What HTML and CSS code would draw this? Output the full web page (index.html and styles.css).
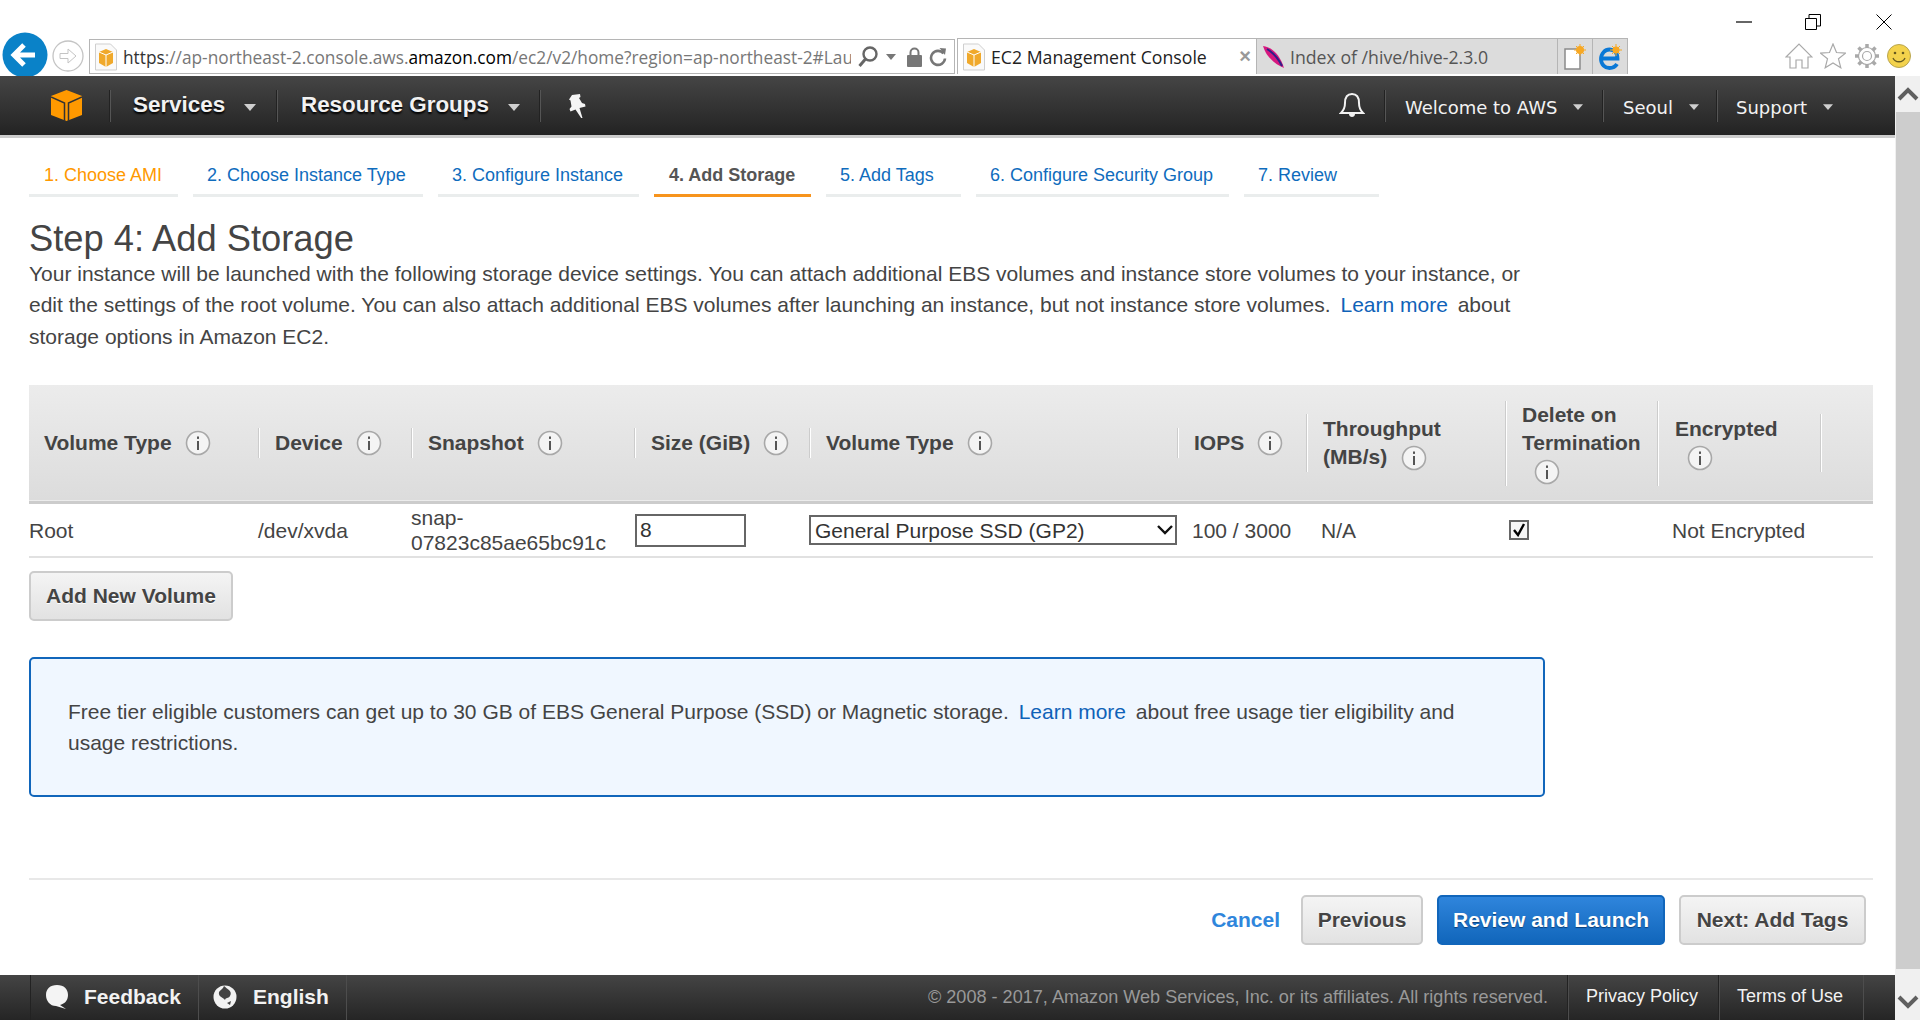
FILE: index.html
```html
<!DOCTYPE html>
<html lang="en">
<head>
<meta charset="utf-8">
<title>EC2 Management Console</title>
<link rel="stylesheet" href="styles.css">
</head>
<body>
<svg class="defs" aria-hidden="true">
  <symbol id="info" viewBox="0 0 26 26">
    <circle cx="13" cy="13" r="11.5" fill="#f4f4f4" stroke="#a8a8a8" stroke-width="1.6"/>
    <rect x="12" y="11" width="2" height="9" fill="#555"/>
    <rect x="12" y="6.5" width="2" height="2.4" fill="#555"/>
  </symbol>
  <symbol id="favicon" viewBox="0 0 24 28">
    <path d="M1.500 1h15l6 6v20h-21z" fill="#fafafa" stroke="#cfcfcf"/>
    <path d="M12 6l7 3v11l-7 4-7-4V9z" fill="#f0a92b"/>
    <path d="M5 9l7 3 7-3M12 12v12" fill="none" stroke="#fff" stroke-width="1"/>
  </symbol>
  <symbol id="caret" viewBox="0 0 12 8">
    <path d="M0 0h12L6 7z" fill="#cfcfcf"/>
  </symbol>
</svg>

<div class="chrome-title">
  <svg class="win-icon win-min" viewBox="0 0 16 16"><path d="M0 8h16" stroke="#000" stroke-width="1.200"/></svg>
  <svg class="win-icon win-max" viewBox="0 0 16 16"><path d="M.5 4.500h11v11H.5zM4 4.500V.5h11.500V12h-4" fill="none" stroke="#000"/></svg>
  <svg class="win-icon win-close" viewBox="0 0 16 16"><path d="M.5.5l15 15M15.500.5l-15 15" stroke="#000"/></svg>
</div>

<div class="chrome-bar">
  <span class="back-btn">
    <svg viewBox="0 0 46 46" width="46" height="46"><circle cx="23" cy="23" r="22.500" fill="#0a82c8"/><path d="M33 23H13M22 13L12 23l10 10" fill="none" stroke="#fff" stroke-width="5"/></svg>
  </span>
  <span class="forward-btn">
    <svg viewBox="0 0 32 32" width="32" height="32"><circle cx="16" cy="16" r="15" fill="#fff" stroke="#c4c4c4" stroke-width="1.300"/><path d="M8 13.500h8V9l8 7-8 7v-4.500H8z" fill="#fff" stroke="#c4c4c4"/></svg>
  </span>
  <div class="address">
    <svg class="fav"><use href="#favicon"/></svg>
    <span class="url"><span class="url-dark">https</span>://ap-northeast-2.console.aws.<span class="url-black">amazon.com</span>/ec2/v2/home?region=ap-northeast-2#LaunchInstanceWizard:</span>
    <svg class="addr-icon" width="20" height="24" viewBox="0 0 20 24"><circle cx="12" cy="9" r="6.500" fill="none" stroke="#666" stroke-width="2.400"/><path d="M7.500 14L1.500 21" stroke="#666" stroke-width="3"/></svg>
    <svg class="addr-caret" width="10" height="6" viewBox="0 0 10 6"><path d="M0 0h10L5 6z" fill="#777"/></svg>
    <svg class="addr-lock" width="15" height="20" viewBox="0 0 15 20"><path d="M3.500 9V5.500a4 4 0 0 1 8 0V9" fill="none" stroke="#777" stroke-width="2"/><rect y="8" width="15" height="12" rx="1" fill="#777"/></svg>
    <svg class="addr-reload" width="18" height="20" viewBox="0 0 18 20"><path d="M14.500 6.500a7 7 0 1 0 1.500 5" fill="none" stroke="#777" stroke-width="2.600"/><path d="M10.500 1l6.500.5-1 6.500z" fill="#777"/></svg>
  </div>
  <div class="tab tab-active">
    <svg class="fav"><use href="#favicon"/></svg>
    <span class="tab-text">EC2 Management Console</span>
    <span class="tab-x">×</span>
  </div>
  <div class="tab tab-idle">
    <svg class="feather" width="24" height="24" viewBox="0 0 24 24"><path d="M1 1c9 1 17 9 21 22C14 20 4 12 1 1z" fill="#d6187f"/><path d="M5 4c5 3 11 9 15 17" fill="none" stroke="#30208a" stroke-width="2"/></svg>
    <span class="tab-text">Index of /hive/hive-2.3.0</span>
  </div>
  <div class="tab-btn">
    <svg width="22" height="26" viewBox="0 0 22 26"><rect x="1" y="5" width="15" height="20" fill="#fff" stroke="#8a8a8a" stroke-width="1.500"/><circle cx="16" cy="6" r="4" fill="#f7a823"/><path d="M16 0v12M10 6h12M12 2l8 8M20 2l-8 8" stroke="#f7a823"/></svg>
  </div>
  <div class="tab-btn">
    <svg width="24" height="26" viewBox="0 0 24 26"><path d="M3.500 14.500h16c0-6-3.500-9-8-9-4.500 0-8.500 4-8.500 9.500s4 9 8.500 9c3.500 0 6-1.500 7.500-4" fill="none" stroke="#0a78d6" stroke-width="3.800"/><circle cx="18" cy="6" r="3.500" fill="#f7a823"/><path d="M18 0v12M12 6h12M14 2l8 8M22 2l-8 8" stroke="#f7a823"/></svg>
  </div>
  <div class="tool-icons">
    <svg width="28" height="26" viewBox="0 0 28 26"><path d="M1 14L14 1l13 13h-4v11h-6v-8h-6v8H5V14z" fill="#fff" stroke="#a9a9a9" stroke-width="1.200"/></svg>
    <svg width="26" height="26" viewBox="0 0 26 26"><path d="M13 1l3.500 8.500 9 .6-7 5.700 2.300 9L13 20l-7.800 4.800 2.300-9-7-5.700 9-.6z" fill="#fff" stroke="#a9a9a9" stroke-width="1.200"/></svg>
    <svg width="26" height="26" viewBox="0 0 26 26"><circle cx="13" cy="13" r="4.500" fill="none" stroke="#a9a9a9" stroke-width="1.200"/><circle cx="13" cy="13" r="8.500" fill="none" stroke="#a9a9a9" stroke-width="1.200"/><path d="M13 1v4M13 21v4M1 13h4M21 13h4M4.500 4.500l3 3M18.500 18.500l3 3M21.500 4.500l-3 3M7.500 18.500l-3 3" stroke="#a9a9a9" stroke-width="3.500"/></svg>
    <svg width="24" height="24" viewBox="0 0 24 24"><circle cx="12" cy="12" r="11.500" fill="#f3d24c" stroke="#b8a550"/><circle cx="8" cy="9" r="1.300" fill="#665a20"/><circle cx="16" cy="9" r="1.300" fill="#665a20"/><path d="M6 14c2 5 10 5 12 0" fill="none" stroke="#665a20" stroke-width="1.300"/></svg>
  </div>
</div>

<div class="viewport">
  <div class="page">
    <header class="topnav">
      <div class="nav-group">
        <a class="nav-logo">
          <svg width="31" height="31" viewBox="0 0 31 31"><path d="M15.500 0L31 6v19l-15.500 6L0 25V6z" fill="#f90"/><path d="M0 7l13.500 6v18M31 7l-13.500 6v18" fill="none" stroke="#333" stroke-width="1.500"/></svg>
        </a>
        <a class="nav-main nav-services">Services<svg class="nav-caret"><use href="#caret"/></svg></a>
        <a class="nav-main nav-groups">Resource Groups<svg class="nav-caret"><use href="#caret"/></svg></a>
        <a class="nav-pin">
          <svg width="20" height="24" viewBox="0 0 20 24"><path d="M5 1l8-1 .5 3-1.500 1 3 5 3 1 .5 2.500-6 1.500 3 10-1 .5-6-9-5 2-1-2.500 2-2.500-1-6-1.500-1z" fill="#f4f4f4"/></svg>
        </a>
      </div>
      <div class="nav-group">
        <a class="nav-bell">
          <svg width="26" height="28" viewBox="0 0 26 28"><path d="M13 2c5 0 7 4 7 9 0 5 2 8 4 10H2c2-2 4-5 4-10 0-5 2-9 7-9z" fill="none" stroke="#f2f2f2" stroke-width="2"/><path d="M10 22c0 4 6 4 6 0z" fill="#f2f2f2"/></svg>
        </a>
        <a class="nav-alt nav-welcome"><span class="nav-alt-text">Welcome to AWS</span><svg class="nav-caret-small"><use href="#caret"/></svg></a>
        <a class="nav-alt nav-seoul"><span class="nav-alt-text">Seoul</span><svg class="nav-caret-small"><use href="#caret"/></svg></a>
        <a class="nav-alt nav-support"><span class="nav-alt-text">Support</span><svg class="nav-caret-small"><use href="#caret"/></svg></a>
      </div>
    </header>

    <main class="content">
      <nav class="steps">
        <a class="step step-1 step-done">1. Choose AMI</a>
        <a class="step step-2">2. Choose Instance Type</a>
        <a class="step step-3">3. Configure Instance</a>
        <a class="step step-4 step-current">4. Add Storage</a>
        <a class="step step-5">5. Add Tags</a>
        <a class="step step-6">6. Configure Security Group</a>
        <a class="step step-7">7. Review</a>
      </nav>

      <h1 class="title">Step 4: Add Storage</h1>
      <p class="intro">Your instance will be launched with the following storage device settings. You can attach additional EBS volumes and instance store volumes to your instance, or edit the settings of the root volume. You can also attach additional EBS volumes after launching an instance, but not instance store volumes. <a class="link">Learn more</a> about storage options in Amazon EC2.</p>

      <table class="volumes">
        <colgroup>
          <col class="c1"><col class="c2"><col class="c3"><col class="c4"><col class="c5"><col class="c6"><col class="c7"><col class="c8"><col class="c9"><col class="c10">
        </colgroup>
        <thead>
          <tr>
            <th class="th-first"><div class="th-in">Volume Type <svg class="i"><use href="#info"/></svg></div></th>
            <th><div class="th-in">Device <svg class="i"><use href="#info"/></svg></div></th>
            <th><div class="th-in">Snapshot <svg class="i"><use href="#info"/></svg></div></th>
            <th><div class="th-in">Size (GiB) <svg class="i"><use href="#info"/></svg></div></th>
            <th><div class="th-in">Volume Type <svg class="i"><use href="#info"/></svg></div></th>
            <th><div class="th-in">IOPS <svg class="i"><use href="#info"/></svg></div></th>
            <th><div class="th-in th-mid"><div>Throughput<br>(MB/s) <svg class="i i-tp"><use href="#info"/></svg></div></div></th>
            <th><div class="th-in th-tall"><div>Delete on<br>Termination<br><svg class="i i-line"><use href="#info"/></svg></div></div></th>
            <th><div class="th-in th-tall th-enc"><div>Encrypted<br><svg class="i i-line"><use href="#info"/></svg></div></div></th>
            <th><div class="th-in th-mid"></div></th>
          </tr>
        </thead>
        <tbody>
          <tr>
            <td>Root</td>
            <td>/dev/xvda</td>
            <td class="td-snap">snap-<br>07823c85ae65bc91c</td>
            <td><input class="size-input" type="text" value="8"></td>
            <td>
              <span class="select-wrap">
                <select class="type-select"><option>General Purpose SSD (GP2)</option></select>
                <svg class="select-chev" width="16" height="10" viewBox="0 0 16 10"><path d="M1 1l7 7 7-7" fill="none" stroke="#111" stroke-width="2.400"/></svg>
              </span>
            </td>
            <td class="td-iops">100 / 3000</td>
            <td class="td-tp">N/A</td>
            <td class="td-check"><span class="check"><svg width="14" height="14" viewBox="0 0 14 14"><path d="M2 7l4 5 6-11" fill="none" stroke="#000" stroke-width="2.400"/></svg></span></td>
            <td class="td-enc" colspan="2">Not Encrypted</td>
          </tr>
        </tbody>
      </table>

      <button class="btn btn-add" type="button">Add New Volume</button>

      <div class="notice">
        <p>Free tier eligible customers can get up to 30 GB of EBS General Purpose (SSD) or Magnetic storage. <a class="link">Learn more</a> about free usage tier eligibility and usage restrictions.</p>
      </div>

      <div class="actions">
        <a class="cancel">Cancel</a>
        <button class="btn btn-prev" type="button">Previous</button>
        <button class="btn btn-primary" type="button">Review and Launch</button>
        <button class="btn btn-next" type="button">Next: Add Tags</button>
      </div>
    </main>

    <footer class="foot">
      <div class="foot-left">
        <a class="foot-item foot-feedback">
          <svg width="26" height="26" viewBox="0 0 26 26"><path d="M13 1c7 0 11 4 11 10s-4 9-8 10l6 4-10-3C6 22 2 17 2 11 2 5 6 1 13 1z" fill="#f4f4f4"/></svg>
          Feedback
        </a>
        <a class="foot-item foot-lang">
          <svg width="24" height="26" viewBox="0 0 24 26"><circle cx="12" cy="13" r="11.500" fill="#f2f2f2"/><path d="M11 2c3 3 9 5 6 10-2 3-4 1-5 4-2-3-7-3-6-8 1-2 4-3 5-6zM14 19l4-2-1 4z" fill="#444"/></svg>
          English
        </a>
      </div>
      <div class="foot-right">
        <span class="copy">© 2008 - 2017, Amazon Web Services, Inc. or its affiliates. All rights reserved.</span>
        <a class="foot-link foot-privacy">Privacy Policy</a>
        <a class="foot-link foot-terms">Terms of Use</a>
      </div>
    </footer>
  </div>
  <div class="scrollbar">
    <div class="sb-btn"><svg width="22" height="14" viewBox="0 0 22 14"><path d="M2 12l9-9 9 9" fill="none" stroke="#5f5f5f" stroke-width="4"/></svg></div>
    <div class="sb-thumb"></div>
    <div class="sb-btn sb-btn-end"><svg width="22" height="14" viewBox="0 0 22 14"><path d="M2 2l9 9 9-9" fill="none" stroke="#5f5f5f" stroke-width="4"/></svg></div>
  </div>
</div>
</body>
</html>
```
FILE: styles.css
```css
* { box-sizing: border-box; }
html, body { margin: 0; height: 100%; overflow: hidden; }
body {
  width: 1920px;
  height: 1020px;
  display: flex;
  flex-direction: column;
  background: #fff;
  font-family: "Liberation Sans", Arial, sans-serif;
  color: #444;
}
.defs { width: 0; height: 0; position: absolute; }

/* browser chrome */
.chrome-title { height: 38px; display: flex; justify-content: flex-end; padding-top: 14px; flex: none; }
.win-icon { width: 16px; height: 16px; }
.win-min { margin-right: 53px; }
.win-max { margin-right: 55px; }
.win-close { margin-right: 28px; }

.chrome-bar { height: 38px; flex: none; display: flex; align-items: flex-start; position: relative; font-family: "Open Sans", sans-serif; font-size: 17.700px; }
.back-btn { position: absolute; left: 2px; top: -6px; height: 44px; overflow: hidden; }
.forward-btn { position: absolute; left: 52px; top: 2px; }
.address {
  margin-left: 89px; width: 866px; height: 35px; margin-top: 1px;
  border: 1px solid #b5b5b5; display: flex; align-items: center; padding-left: 4px;
}
.fav { width: 24px; height: 28px; flex: none; }
.url { width: 728px; margin-left: 5px; white-space: nowrap; overflow: hidden; color: #777; font-size: 17.300px; padding-top: 1px; }
.url-dark { color: #333; }
.url-black { color: #000; }
.addr-icon { margin-left: 7px; }
.addr-caret { margin-left: 8px; }
.addr-lock { margin-left: 11px; }
.addr-reload { margin-left: 7px; }
.tab { height: 36px; display: flex; align-items: center; border: 1px solid #b5b5b5; border-bottom: 0; }
.tab-active { margin-left: 2px; width: 300px; padding-left: 4px; color: #222; }
.tab-active .tab-text { margin-left: 5px; padding-top: 1px; }
.tab-x { margin-left: auto; margin-right: 5px; color: #999; font-size: 20px; font-weight: 700; font-family: "Liberation Sans", sans-serif; }
.tab-idle { width: 301px; background: #dcdcdc; padding-left: 5px; color: #555; border-left: 0; }
.tab-idle .tab-text { margin-left: 4px; padding-top: 1px; }
.tab-btn { width: 35px; height: 36px; background: #dcdcdc; border: 1px solid #b5b5b5; border-left: 0; border-bottom: 0; display: flex; align-items: center; justify-content: center; }
.tool-icons { margin-left: auto; margin-right: 9px; width: 126px; display: flex; justify-content: space-between; align-items: center; height: 36px; }

.viewport { flex: 1; display: flex; min-height: 0; position: relative; }
.page { flex: 1; min-width: 0; display: flex; flex-direction: column; }

/* top nav */
.topnav {
  height: 62px; flex: none; display: flex; justify-content: space-between;
  background: linear-gradient(#454545, #232323);
  border-bottom: 3px solid #ccc; color: #f2f2f2;
}
.nav-group { display: flex; align-items: center; height: 59px; }
.nav-logo { margin-left: 51px; width: 59px; height: 31px; display: block; }
.nav-main {
  display: flex; align-items: center; height: 32px; border-left: 1px solid #555; box-shadow: -1px 0 0 #222;
  font-weight: 700; font-size: 22.400px; text-shadow: 0 2px 2px #000; padding-bottom: 2px;
}
.nav-services { width: 167px; padding-left: 22px; }
.nav-groups { width: 263px; padding-left: 23px; }
.nav-caret { width: 14px; height: 8px; margin-left: 18px; margin-top: 6px; }
.nav-pin { height: 32px; border-left: 1px solid #555; box-shadow: -1px 0 0 #222; padding-left: 26px; display: flex; align-items: center; }
.nav-bell { width: 46px; display: flex; }
.nav-alt {
  display: flex; align-items: center; height: 32px; border-left: 1px solid #555; box-shadow: -1px 0 0 #222;
  font-family: "DejaVu Sans", sans-serif; font-size: 18px; padding-left: 19px;
}
.nav-alt-text { padding-top: 4px; }
.nav-welcome { width: 218px; }
.nav-seoul { width: 114px; }
.nav-support { width: 178px; padding-left: 18px; }
.nav-caret-small { width: 10px; height: 7px; margin-left: 16px; margin-top: 4px; }

/* page content */
.content { flex: 1; min-height: 0; padding: 0 22px 0 29px; display: flex; flex-direction: column; align-items: flex-start; }
.steps { display: flex; margin-top: 18px; height: 41px; }
.step {
  font-size: 18px; line-height: 38px; height: 41px; border-bottom: 3px solid #eaeded; color: #0f6cbd; padding-left: 14px; margin-right: 15px; white-space: nowrap;
}
.step-1 { width: 149px; padding-left: 15px; }
.step-2 { width: 230px; }
.step-3 { width: 201px; }
.step-4 { width: 157px; padding-left: 15px; }
.step-5 { width: 135px; }
.step-6 { width: 253px; }
.step-7 { width: 135px; margin-right: 0; }
.step-done { color: #f90; }
.step-current { color: #555; font-weight: 700; border-bottom-color: #f7941d; }

.title { margin: 22px 0 0; font-size: 36.300px; font-weight: 400; line-height: 39px; color: #444; }
.intro { margin: 0; width: 1530px; font-size: 21px; line-height: 31.300px; color: #444; }
.link { color: #0f62b8; margin: 0 4px; }

.volumes { table-layout: fixed; width: 1844px; border-collapse: collapse; margin-top: 33px; }
.c1 { width: 229px; } .c2 { width: 153px; } .c3 { width: 223px; } .c4 { width: 175px; } .c5 { width: 368px; }
.c6 { width: 129px; } .c7 { width: 199px; } .c8 { width: 152px; } .c9 { width: 163px; } .c10 { width: 53px; }
.volumes thead tr { background: linear-gradient(#ececec, #dcdcdc); border-bottom: 3px solid #ccc; }
.volumes th { height: 118px; padding: 0; text-align: left; font-size: 21px; font-weight: 700; color: #444; line-height: 28px; }
.th-in {
  display: flex; align-items: center; gap: 0; height: 30px; padding-left: 16px; white-space: nowrap;
  border-left: 1px solid #ccc; box-shadow: inset 1px 0 0 #fff;
}
.th-first .th-in { border-left: 0; box-shadow: none; padding-left: 15px; }
.th-mid { height: 58px; }
.th-tall { height: 85px; }
.th-enc { padding-left: 17px; }
.i { width: 26px; height: 26px; margin-left: 13px; vertical-align: middle; flex: none; }
.i-tp { margin-left: 8px; }
.i-line { margin-left: 12px; display: inline-block; }
.volumes tbody tr { border-bottom: 2px solid #e1e1e1; }
.volumes td { height: 54px; padding: 0; font-size: 21px; line-height: 25px; color: #444; }
.size-input { width: 111px; height: 33px; margin-left: 1px; border: 2px solid #666; padding: 0 3px; font: inherit; color: #333; background: #fff; display: block; }
.select-wrap { display: block; position: relative; width: 368px; }
.type-select {
  width: 100%; height: 30px; border: 2px solid #666; appearance: none; -webkit-appearance: none; background: #fff;
  padding: 0 4px; font: inherit; color: #333; display: block; border-radius: 0;
}
.select-chev { position: absolute; right: 4px; top: 10px; }
.td-iops { padding-left: 15px !important; }
.td-tp { padding-left: 15px !important; }
.td-check { padding-left: 4px !important; }
.td-enc { padding-left: 15px !important; }
.check { display: flex; align-items: center; justify-content: center; width: 20px; height: 20px; border: 2px solid #666; background: #f6f6f6; }

.btn {
  font-family: "Liberation Sans", sans-serif; font-weight: 700; font-size: 21px; color: #444;
  height: 50px; border: 2px solid #ccc; border-radius: 5px; background: linear-gradient(#f4f4f4, #e2e2e2); padding: 0;
  text-shadow: 0 1px 0 #fff;
}
.btn-add { width: 204px; margin-top: 13px; }
.notice {
  width: 1516px; height: 140px; margin-top: 36px; border: 2px solid #1166bb; border-radius: 5px; background: #f0f7ff;
  padding: 37px 60px 0 37px; font-size: 21px; line-height: 31px; color: #444;
}
.notice p { margin: 0; }
.actions {
  width: 1844px; height: 67px; margin-top: 81px; border-top: 2px solid #e8e8e8; padding-top: 15px; padding-right: 7px;
  display: flex; justify-content: flex-end; align-items: flex-start; gap: 14px;
}
.cancel { color: #2f86dc; font-weight: 700; font-size: 21px; line-height: 50px; margin-right: 7px; }
.btn-prev { width: 122px; }
.btn-primary { width: 228px; color: #fff; border-color: #1166bb; background: linear-gradient(#2f85dc, #1166bb); text-shadow: 0 1px 1px #0a3f78; }
.btn-next { width: 187px; }

/* footer */
.foot {
  height: 45px; flex: none; display: flex; justify-content: space-between;
  background: linear-gradient(#444, #252525); color: #f2f2f2; font-size: 18px;
}
.foot-left { display: flex; margin-left: 30px; }
.foot-item {
  display: flex; align-items: center; gap: 14px; height: 45px; padding: 0 0 2px 13px; font-weight: 700; font-size: 21px;
  border-left: 1px solid #222; border-right: 1px solid #4d4d4d;
}
.foot-feedback { width: 169px; }
.foot-lang { width: 148px; border-left: 0; padding-left: 14px; gap: 16px; }
.foot-right { display: flex; align-items: center; }
.copy { color: #999; margin-right: 19px; font-size: 18.100px; }
.foot-link { height: 45px; line-height: 43px; display: block; border-left: 1px solid #222; box-shadow: inset 1px 0 0 #4d4d4d; padding-left: 18px; }
.foot-privacy { width: 151px; }
.foot-terms { width: 146px; border-right: 1px solid #4d4d4d; margin-right: 31px; }

/* scrollbar */
.scrollbar { width: 25px; flex: none; background: #f0f0f0; display: flex; flex-direction: column; }
.sb-btn { height: 36px; display: flex; align-items: center; justify-content: center; }
.sb-thumb { flex: 1; background: #cdcdcd; margin-left: 1px; }
.sb-btn-end { height: 51px; padding-top: 14px; }
```
